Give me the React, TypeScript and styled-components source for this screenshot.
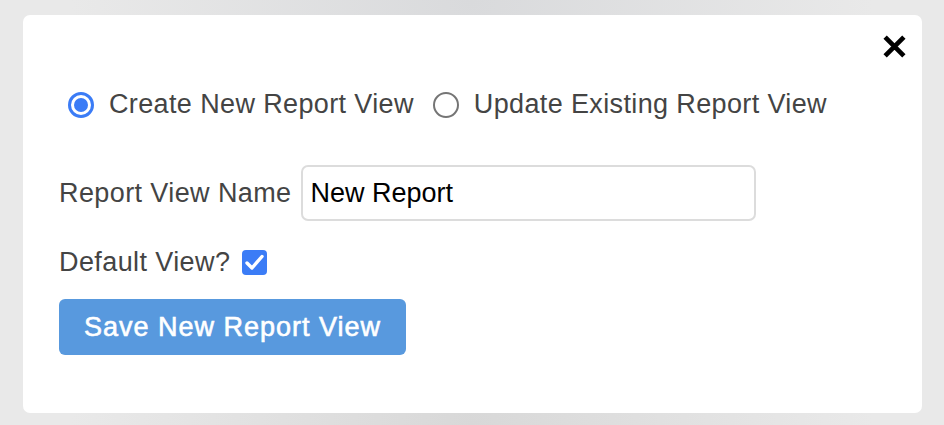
import React, { useState } from "react";
import styled, { createGlobalStyle } from "styled-components";

const GlobalStyle = createGlobalStyle`
  html, body {
    margin: 0;
    padding: 0;
  }
  body {
    font-family: "Liberation Sans", Arial, sans-serif;
  }
`;

const Backdrop = styled.div`
  width: 944px;
  height: 425px;
  box-sizing: border-box;
  padding: 15px 22px 12px 23px;
  background:
    radial-gradient(ellipse at 50% 0%, #d9dadc 0%, rgba(217, 218, 220, 0) 60%),
    radial-gradient(ellipse at 50% 100%, #d8d8d8 0%, rgba(216, 216, 216, 0) 60%),
    #e9e9e9;
`;

const Card = styled.div`
  position: relative;
  height: 100%;
  box-sizing: border-box;
  background: #fff;
  border-radius: 7px;
  padding: 74px 36px 0 36px;
  display: flex;
  flex-direction: column;
`;

const CloseButton = styled.button`
  position: absolute;
  top: 16px;
  right: 13px;
  width: 30px;
  height: 30px;
  border: none;
  background: none;
  padding: 0;
  cursor: pointer;
  display: flex;
  align-items: center;
  justify-content: center;
`;

const RadioRow = styled.div`
  display: flex;
  align-items: center;
  padding-left: 9px;
  gap: 19px;
  margin-bottom: 45px;
`;

const RadioLabel = styled.label`
  display: flex;
  align-items: center;
  gap: 15px;
  font-size: 27px;
  letter-spacing: 0.37px;
  color: #444;
  cursor: pointer;
`;

const RadioCircle = styled.span<{ $checked: boolean }>`
  width: 26px;
  height: 26px;
  box-sizing: border-box;
  border-radius: 50%;
  border: ${(p) => (p.$checked ? "3px solid #3b7cf6" : "2px solid #757575")};
  display: flex;
  align-items: center;
  justify-content: center;
  &::after {
    content: "";
    display: ${(p) => (p.$checked ? "block" : "none")};
    width: 14px;
    height: 14px;
    border-radius: 50%;
    background: #3b7cf6;
  }
`;

const FieldRow = styled.div`
  display: flex;
  align-items: center;
  gap: 9px;
  margin-bottom: 26px;
`;

const FieldLabel = styled.span`
  font-size: 27px;
  letter-spacing: 0.4px;
  color: #444;
`;

const TextInput = styled.input`
  width: 455px;
  height: 56px;
  box-sizing: border-box;
  border: 2px solid #dcdcdc;
  border-radius: 7px;
  padding: 0 8px;
  font-family: "Liberation Sans", Arial, sans-serif;
  font-size: 27px;
  color: #000;
  outline: none;
`;

const CheckRow = styled.div`
  display: flex;
  align-items: center;
  gap: 12px;
  margin-bottom: 21px;
`;

const CheckBox = styled.span`
  width: 25px;
  height: 25px;
  border-radius: 4px;
  background: #3b7cf6;
  display: flex;
  align-items: center;
  justify-content: center;
`;

const SaveButton = styled.button`
  align-self: flex-start;
  width: 347px;
  height: 56px;
  border: none;
  border-radius: 6px;
  background: #5899de;
  color: #fff;
  font-family: "Liberation Sans", Arial, sans-serif;
  font-size: 27px;
  font-weight: 400;
  letter-spacing: 1px;
  -webkit-text-stroke: 0.6px #fff;
  cursor: pointer;
`;

const App = (): JSX.Element => {
  const [mode, setMode] = useState<"create" | "update">("create");
  const [name, setName] = useState("New Report");

  return (
    <>
      <GlobalStyle />
      <Backdrop>
        <Card>
          <CloseButton aria-label="Close">
            <svg width="25" height="25" viewBox="0 0 24 24">
              <path d="M3 3 L21 21 M21 3 L3 21" stroke="#000" strokeWidth="4.5" strokeLinecap="butt" />
            </svg>
          </CloseButton>
          <RadioRow>
            <RadioLabel onClick={() => setMode("create")}>
              <RadioCircle $checked={mode === "create"} />
              Create New Report View
            </RadioLabel>
            <RadioLabel onClick={() => setMode("update")}>
              <RadioCircle $checked={mode === "update"} />
              Update Existing Report View
            </RadioLabel>
          </RadioRow>
          <FieldRow>
            <FieldLabel>Report View Name</FieldLabel>
            <TextInput value={name} onChange={(e) => setName(e.target.value)} />
          </FieldRow>
          <CheckRow>
            <FieldLabel>Default View?</FieldLabel>
            <CheckBox>
              <svg width="25" height="25" viewBox="0 0 25 25">
                <path d="M5 13 L10 18 L20 6.5" stroke="#fff" strokeWidth="3.4" fill="none" strokeLinecap="round" strokeLinejoin="round" />
              </svg>
            </CheckBox>
          </CheckRow>
          <SaveButton>Save New Report View</SaveButton>
        </Card>
      </Backdrop>
    </>
  );
};

export default App;
